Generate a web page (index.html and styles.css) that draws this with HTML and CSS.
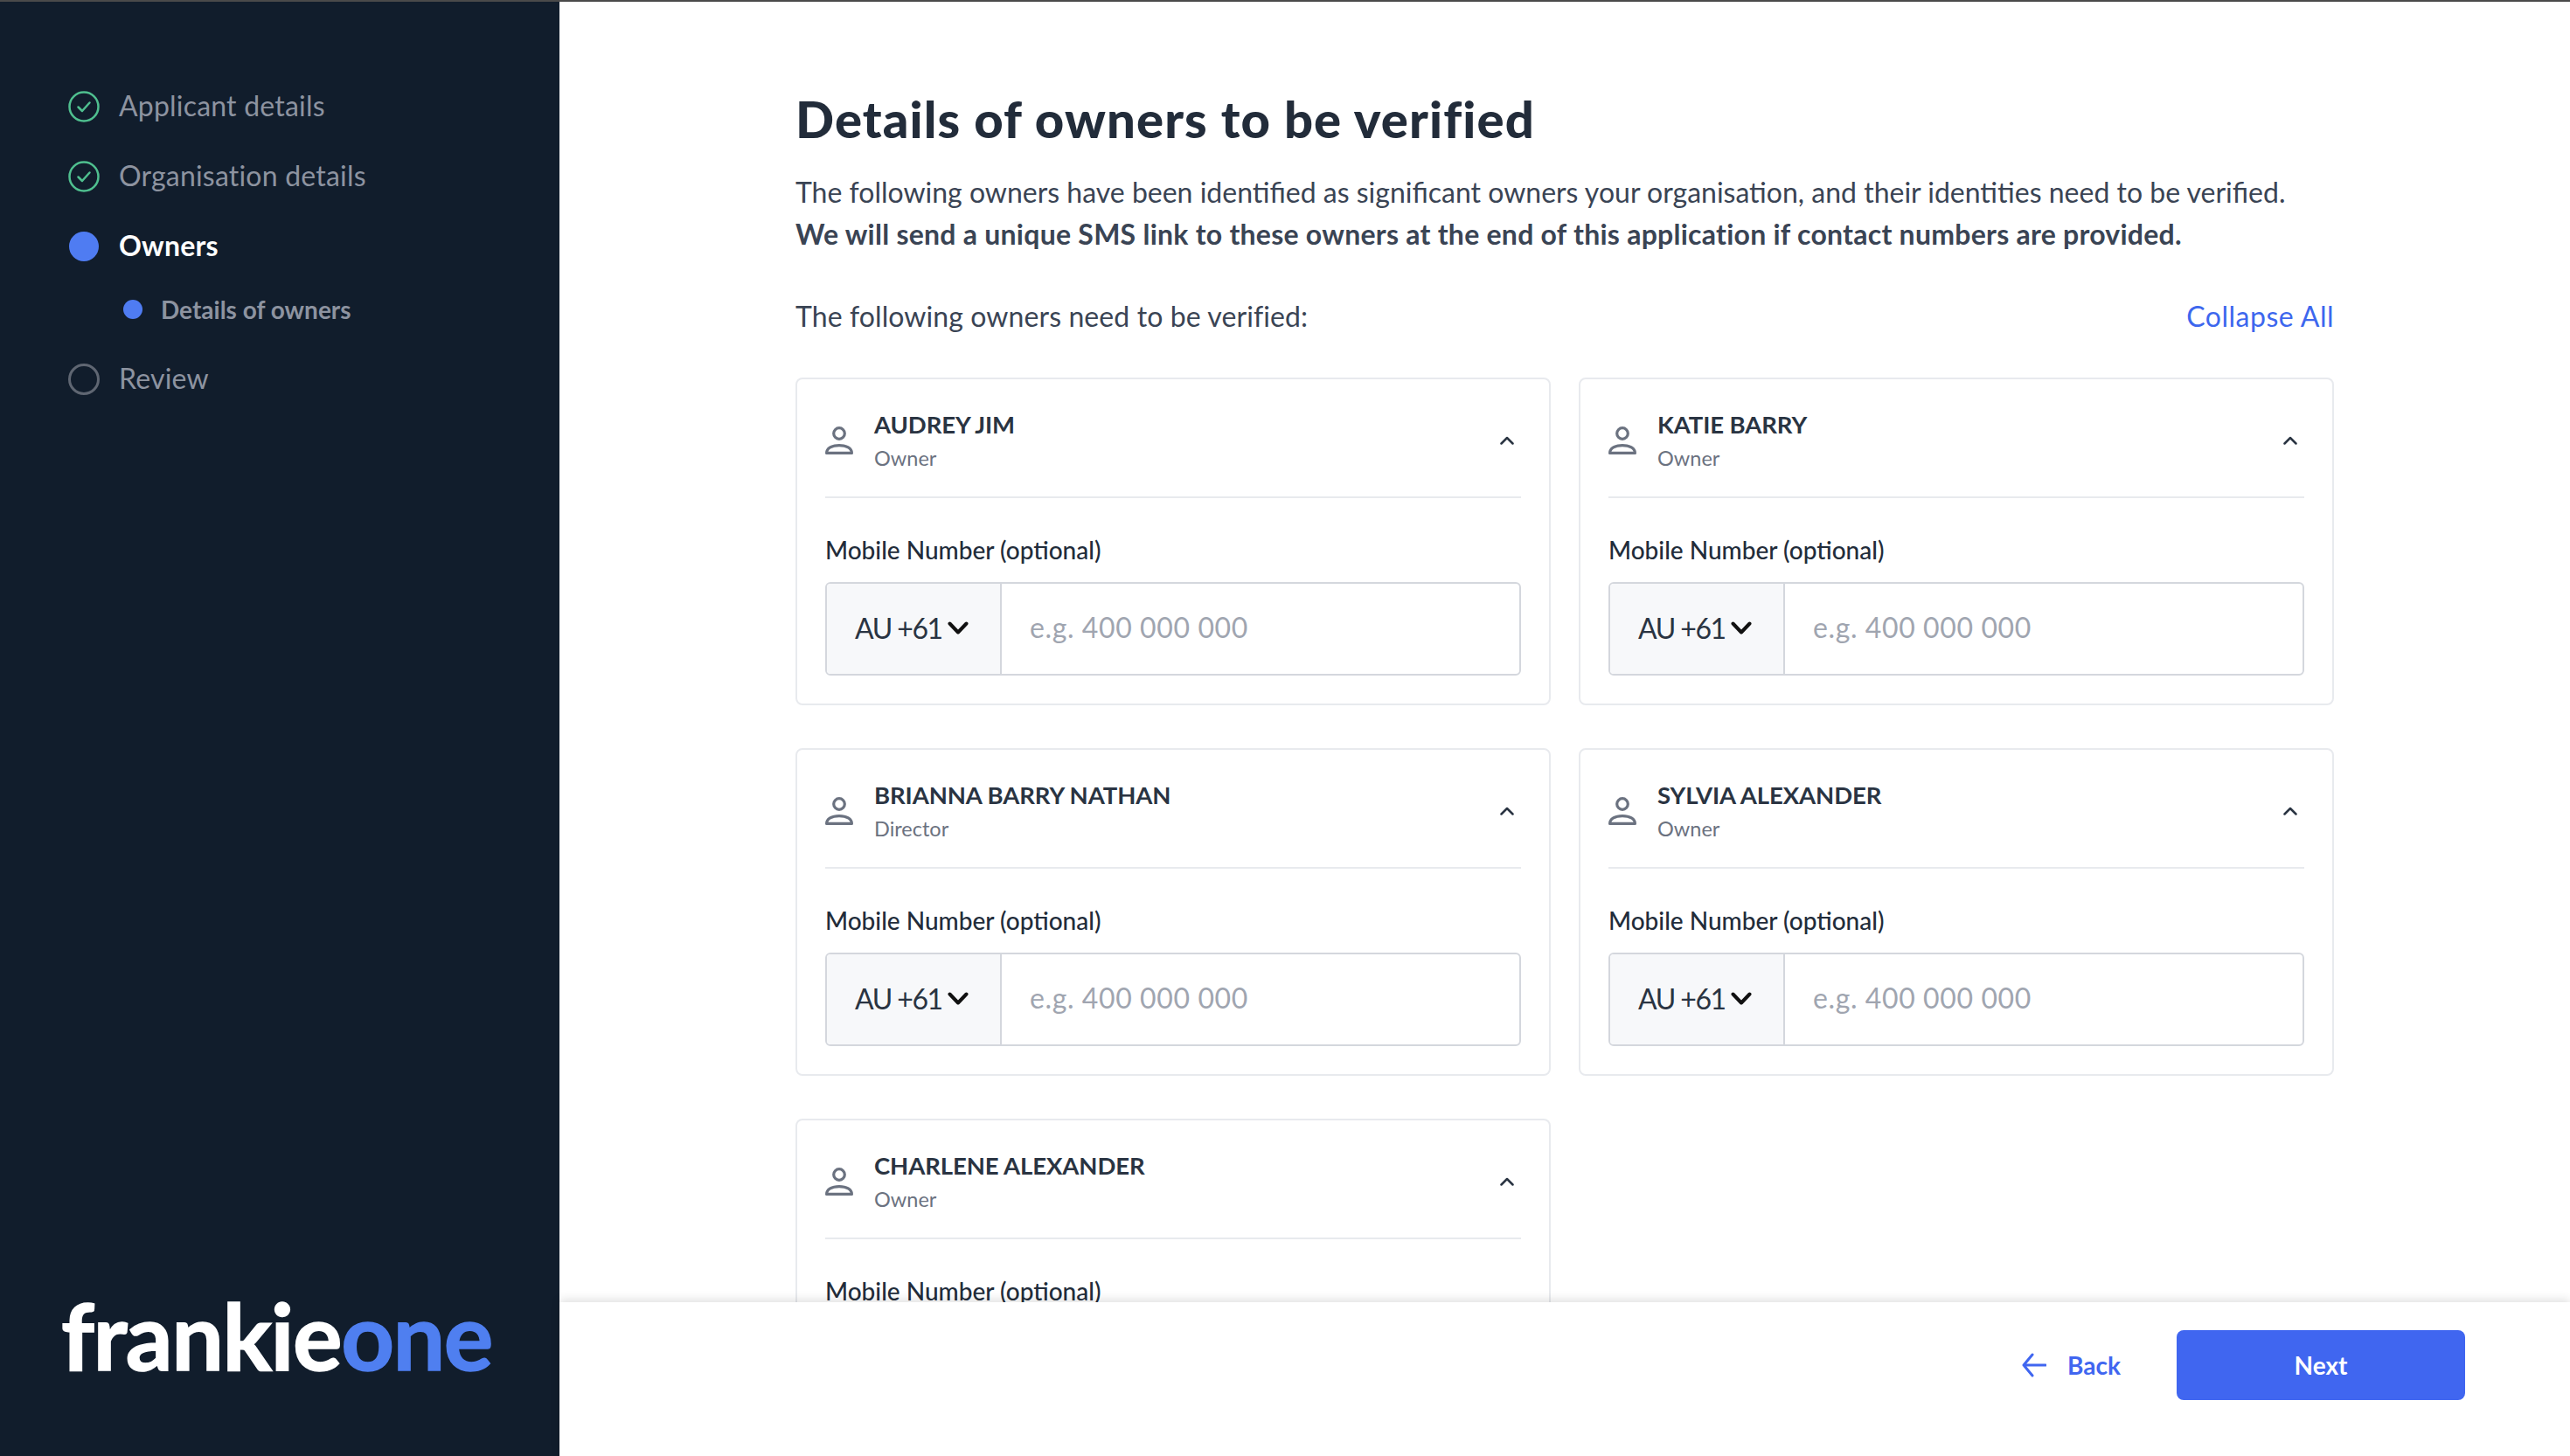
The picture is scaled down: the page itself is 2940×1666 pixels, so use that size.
FILE: index.html
```html
<!DOCTYPE html>
<html lang="en">
<head>
    <meta charset="UTF-8">
    <title>Details of owners</title>
    <link rel="stylesheet" href="styles.css">
</head>
<body>
    <div class="top-line"></div>
    <div class="layout">
        <aside class="sidebar">
            <nav class="steps">
                <div class="step done">
                    <svg class="step-icon" width="36" height="36" viewBox="0 0 36 36" fill="none"><circle cx="18" cy="18" r="16.5" stroke="#4fbf8f" stroke-width="2.5"/><path d="M11.5 18.5l4.5 4.5 8.5-9.5" stroke="#4fbf8f" stroke-width="2.5" stroke-linecap="round" stroke-linejoin="round"/></svg>
                    <span class="step-text">Applicant details</span>
                </div>
                <div class="step done">
                    <svg class="step-icon" width="36" height="36" viewBox="0 0 36 36" fill="none"><circle cx="18" cy="18" r="16.5" stroke="#4fbf8f" stroke-width="2.5"/><path d="M11.5 18.5l4.5 4.5 8.5-9.5" stroke="#4fbf8f" stroke-width="2.5" stroke-linecap="round" stroke-linejoin="round"/></svg>
                    <span class="step-text">Organisation details</span>
                </div>
                <div class="step active">
                    <span class="step-dot"></span>
                    <span class="step-text">Owners</span>
                </div>
                <div class="sub-step">
                    <span class="sub-dot"></span>
                    <span>Details of owners</span>
                </div>
                <div class="step review">
                    <span class="step-ring"></span>
                    <span class="step-text">Review</span>
                </div>
            </nav>
            <div class="logo">frankie<span class="logo-one">one</span></div>
        </aside>

        <main class="main">
            <div class="content">
                <h1>Details of owners to be verified</h1>
                <p class="intro">The following owners have been identified as significant owners your organisation, and their identities need to be verified.</p>
                <p class="intro strong">We will send a unique SMS link to these owners at the end of this application if contact numbers are provided.</p>
                <div class="list-head">
                    <span>The following owners need to be verified:</span>
                    <a class="collapse" href="#">Collapse All</a>
                </div>
                <div class="owners">
                    <section class="card">
                        <div class="card-head">
                            <svg class="person" width="32" height="32" viewBox="0 0 32 32" fill="none"><circle cx="16" cy="8" r="6.300" stroke="#6b7280" stroke-width="3.200"/><path d="M1.600 30.400c0-5.500 6-8.800 14.400-8.800s14.400 3.300 14.400 8.800z" stroke="#6b7280" stroke-width="3.200" stroke-linejoin="round"/></svg>
                            <div class="who">
                                <div class="name">AUDREY JIM</div>
                                <div class="role">Owner</div>
                            </div>
                            <svg class="chev-up" width="16" height="10" viewBox="0 0 16 10" fill="none"><path d="M1.500 8.500L8 2l6.500 6.500" stroke="#2a3442" stroke-width="2.500" stroke-linecap="round" stroke-linejoin="round"/></svg>
                        </div>
                        <div class="field-label">Mobile Number (optional)</div>
                        <div class="phone">
                            <div class="country">AU +61
                                <svg width="24" height="15" viewBox="0 0 24 15" fill="none"><path d="M2.500 2.500l9.500 10 9.500-10" stroke="#111" stroke-width="4" stroke-linecap="round" stroke-linejoin="round"/></svg>
                            </div>
                            <div class="number">e.g. 400 000 000</div>
                        </div>
                    </section>
                    <section class="card">
                        <div class="card-head">
                            <svg class="person" width="32" height="32" viewBox="0 0 32 32" fill="none"><circle cx="16" cy="8" r="6.300" stroke="#6b7280" stroke-width="3.200"/><path d="M1.600 30.400c0-5.500 6-8.800 14.400-8.800s14.400 3.300 14.400 8.800z" stroke="#6b7280" stroke-width="3.200" stroke-linejoin="round"/></svg>
                            <div class="who">
                                <div class="name">KATIE BARRY</div>
                                <div class="role">Owner</div>
                            </div>
                            <svg class="chev-up" width="16" height="10" viewBox="0 0 16 10" fill="none"><path d="M1.500 8.500L8 2l6.500 6.500" stroke="#2a3442" stroke-width="2.500" stroke-linecap="round" stroke-linejoin="round"/></svg>
                        </div>
                        <div class="field-label">Mobile Number (optional)</div>
                        <div class="phone">
                            <div class="country">AU +61
                                <svg width="24" height="15" viewBox="0 0 24 15" fill="none"><path d="M2.500 2.500l9.500 10 9.500-10" stroke="#111" stroke-width="4" stroke-linecap="round" stroke-linejoin="round"/></svg>
                            </div>
                            <div class="number">e.g. 400 000 000</div>
                        </div>
                    </section>
                    <section class="card">
                        <div class="card-head">
                            <svg class="person" width="32" height="32" viewBox="0 0 32 32" fill="none"><circle cx="16" cy="8" r="6.300" stroke="#6b7280" stroke-width="3.200"/><path d="M1.600 30.400c0-5.500 6-8.800 14.400-8.800s14.400 3.300 14.400 8.800z" stroke="#6b7280" stroke-width="3.200" stroke-linejoin="round"/></svg>
                            <div class="who">
                                <div class="name">BRIANNA BARRY NATHAN</div>
                                <div class="role">Director</div>
                            </div>
                            <svg class="chev-up" width="16" height="10" viewBox="0 0 16 10" fill="none"><path d="M1.500 8.500L8 2l6.500 6.500" stroke="#2a3442" stroke-width="2.500" stroke-linecap="round" stroke-linejoin="round"/></svg>
                        </div>
                        <div class="field-label">Mobile Number (optional)</div>
                        <div class="phone">
                            <div class="country">AU +61
                                <svg width="24" height="15" viewBox="0 0 24 15" fill="none"><path d="M2.500 2.500l9.500 10 9.500-10" stroke="#111" stroke-width="4" stroke-linecap="round" stroke-linejoin="round"/></svg>
                            </div>
                            <div class="number">e.g. 400 000 000</div>
                        </div>
                    </section>
                    <section class="card">
                        <div class="card-head">
                            <svg class="person" width="32" height="32" viewBox="0 0 32 32" fill="none"><circle cx="16" cy="8" r="6.300" stroke="#6b7280" stroke-width="3.200"/><path d="M1.600 30.400c0-5.500 6-8.800 14.400-8.800s14.400 3.300 14.400 8.800z" stroke="#6b7280" stroke-width="3.200" stroke-linejoin="round"/></svg>
                            <div class="who">
                                <div class="name">SYLVIA ALEXANDER</div>
                                <div class="role">Owner</div>
                            </div>
                            <svg class="chev-up" width="16" height="10" viewBox="0 0 16 10" fill="none"><path d="M1.500 8.500L8 2l6.500 6.500" stroke="#2a3442" stroke-width="2.500" stroke-linecap="round" stroke-linejoin="round"/></svg>
                        </div>
                        <div class="field-label">Mobile Number (optional)</div>
                        <div class="phone">
                            <div class="country">AU +61
                                <svg width="24" height="15" viewBox="0 0 24 15" fill="none"><path d="M2.500 2.500l9.500 10 9.500-10" stroke="#111" stroke-width="4" stroke-linecap="round" stroke-linejoin="round"/></svg>
                            </div>
                            <div class="number">e.g. 400 000 000</div>
                        </div>
                    </section>
                    <section class="card">
                        <div class="card-head">
                            <svg class="person" width="32" height="32" viewBox="0 0 32 32" fill="none"><circle cx="16" cy="8" r="6.300" stroke="#6b7280" stroke-width="3.200"/><path d="M1.600 30.400c0-5.500 6-8.800 14.400-8.800s14.400 3.300 14.400 8.800z" stroke="#6b7280" stroke-width="3.200" stroke-linejoin="round"/></svg>
                            <div class="who">
                                <div class="name">CHARLENE ALEXANDER</div>
                                <div class="role">Owner</div>
                            </div>
                            <svg class="chev-up" width="16" height="10" viewBox="0 0 16 10" fill="none"><path d="M1.500 8.500L8 2l6.500 6.500" stroke="#2a3442" stroke-width="2.500" stroke-linecap="round" stroke-linejoin="round"/></svg>
                        </div>
                        <div class="field-label">Mobile Number (optional)</div>
                        <div class="phone">
                            <div class="country">AU +61
                                <svg width="24" height="15" viewBox="0 0 24 15" fill="none"><path d="M2.500 2.500l9.500 10 9.500-10" stroke="#111" stroke-width="4" stroke-linecap="round" stroke-linejoin="round"/></svg>
                            </div>
                            <div class="number">e.g. 400 000 000</div>
                        </div>
                    </section>
                </div>
            </div>
            <footer class="footer">
                <a class="back" href="#">
                    <svg width="28" height="28" viewBox="0 0 28 28" fill="none"><path d="M27 14H2M12 2L2 14l10 12" stroke="#4066f0" stroke-width="3" stroke-linecap="round" stroke-linejoin="round"/></svg>
                    Back
                </a>
                <button type="button" class="next">Next</button>
            </footer>
        </main>
    </div>
</body>
</html>
```

FILE: styles.css
```css
html, body {
    height: 100%;
}

body {
    margin: 0;
    overflow: hidden;
    font-family: 'Lato', sans-serif;
    color: #2a3442;
    background-color: #fff;
}

.top-line {
    height: 2px;
    background-color: #4a4a4a;
}

.layout {
    display: flex;
    height: 1664px;
}

/* sidebar */
.sidebar {
    width: 640px;
    flex-shrink: 0;
    box-sizing: border-box;
    background-color: #111d2c;
    padding: 80px 0 86px 70px;
    display: flex;
    flex-direction: column;
    justify-content: space-between;
}

.step {
    display: flex;
    align-items: center;
    height: 80px;
    padding-left: 2px;
    font-size: 32px;
    letter-spacing: 0.2px;
    color: #8d93a0;
}

.step-text {
    padding-bottom: 4px;
}

.step-icon,
.step-dot,
.step-ring {
    flex-shrink: 0;
    margin-left: 6px;
    margin-right: 22px;
}

.step-dot {
    width: 34px;
    height: 34px;
    margin-left: 7px;
    margin-right: 23px;
    border-radius: 50%;
    background-color: #4f7cf2;
}

.step-ring {
    box-sizing: border-box;
    width: 36px;
    height: 36px;
    border: 3px solid #5f6672;
    border-radius: 50%;
}

.step.active {
    color: #fff;
    font-weight: 700;
}

.step.review {
    margin-top: 20px;
}

.sub-step {
    display: flex;
    align-items: center;
    height: 40px;
    margin-top: 12px;
    padding-left: 71px;
    font-size: 28px;
    font-weight: 700;
    color: #8d93a0;
}

.sub-dot {
    width: 22px;
    height: 22px;
    margin-right: 21px;
    border-radius: 50%;
    background-color: #4f7cf2;
}

.logo {
    font-size: 106px;
    line-height: 1;
    font-weight: 700;
    color: #fff;
    letter-spacing: -1.5px;
    -webkit-text-stroke: 1.5px currentColor;
}

.logo-one {
    color: #4f7ff0;
}

/* main */
.main {
    flex: 1;
    min-width: 0;
    display: flex;
    flex-direction: column;
}

.content {
    flex: 1;
    min-height: 0;
    overflow: hidden;
    padding: 0 270px;
}

h1 {
    margin: 100px 0 0;
    font-size: 58px;
    line-height: 68px;
    font-weight: 900;
    letter-spacing: 1.1px;
    color: #222c3a;
}

.intro {
    margin: 0;
    font-size: 32px;
    line-height: 48px;
    color: #3a4454;
}

.content h1 + .intro {
    margin-top: 26px;
}

.intro.strong {
    font-weight: 700;
    letter-spacing: 0.25px;
}

.list-head {
    display: flex;
    justify-content: space-between;
    align-items: center;
    margin-top: 46px;
    font-size: 32px;
    line-height: 48px;
    letter-spacing: 0.1px;
    color: #3a4454;
}

.collapse {
    letter-spacing: 0.5px;
    color: #3d67ee;
    text-decoration: none;
}

.owners {
    display: grid;
    grid-template-columns: 1fr 1fr;
    column-gap: 32px;
    row-gap: 49px;
    margin-top: 46px;
}

.card {
    box-sizing: border-box;
    height: 375px;
    padding: 0 32px;
    border: 2px solid #e8eaee;
    border-radius: 8px;
}

.card-head {
    display: flex;
    align-items: center;
    height: 136px;
    box-sizing: border-box;
    padding-top: 6px;
    border-bottom: 2px solid #e8eaee;
}

.person {
    flex-shrink: 0;
    margin-right: 24px;
}

.who {
    flex: 1;
}

.name {
    font-size: 27.5px;
    line-height: 36px;
    font-weight: 700;
    letter-spacing: -0.1px;
    color: #2a3442;
}

.role {
    margin-top: 4px;
    font-size: 23.5px;
    line-height: 32px;
    color: #6b7280;
}

.chev-up {
    margin-right: 8px;
}

.field-label {
    margin-top: 39px;
    font-size: 28px;
    line-height: 40px;
    font-weight: 500;
    color: #222c3a;
}

.phone {
    display: flex;
    box-sizing: border-box;
    height: 107px;
    margin-top: 17px;
    border: 2px solid #d4d7dd;
    border-radius: 6px;
    font-size: 32px;
}

.country {
    display: flex;
    align-items: center;
    gap: 6px;
    box-sizing: border-box;
    width: 200px;
    padding-left: 32px;
    padding-bottom: 2px;
    background-color: #f7f8fa;
    border-right: 2px solid #d4d7dd;
    border-radius: 4px 0 0 4px;
    letter-spacing: -1.5px;
    color: #2a3442;
}

.number {
    display: flex;
    align-items: center;
    padding-left: 32px;
    padding-bottom: 4px;
    letter-spacing: 0.6px;
    color: #a0a5b0;
}

/* footer */
.footer {
    position: relative;
    flex-shrink: 0;
    height: 176px;
    box-sizing: border-box;
    padding: 32px 120px 0 0;
    display: flex;
    justify-content: flex-end;
    align-items: flex-start;
    gap: 64px;
    background-color: #fff;
    box-shadow: 0 -3px 10px rgba(0, 0, 0, 0.12);
}

.back {
    display: flex;
    align-items: center;
    gap: 24px;
    height: 80px;
    font-size: 28px;
    font-weight: 700;
    color: #4066f0;
    text-decoration: none;
}

.next {
    width: 330px;
    height: 80px;
    border: none;
    border-radius: 8px;
    font-family: inherit;
    font-size: 28px;
    font-weight: 700;
    color: #fff;
    background-color: #4066f0;
    cursor: pointer;
}
```
